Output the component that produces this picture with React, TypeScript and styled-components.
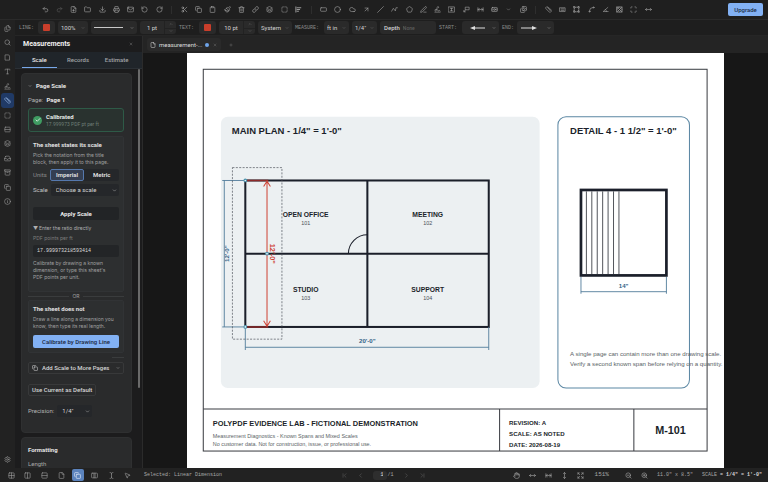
import React from "react";
import styled, { createGlobalStyle, css } from "styled-components";
import {
  Undo2, Redo2, FilePlus, Folder, Download, Printer, Mail, RotateCcw, RotateCw, Scissors, Copy, Clipboard,
  Paintbrush, Trash2, Link, Layers, SquareDashed, RectangleHorizontal, Circle, Cloud, ArrowUpRight, Slash,
  Pentagon, PenLine, Signature, ChevronDown, Images, Ruler, VectorSquare, Spline, Scan, MoveHorizontal,
  MoveVertical, Files, Search, Type, Inbox, Archive, Info, Settings, X, Plus, File,
  Grid2x2, Columns2, Rows2, TextCursor, MousePointer2, ChevronLeft, ChevronRight, ChevronFirst, ChevronLast,
  ZoomIn, ZoomOut, Check, Hand, Expand, ChevronUp,
} from "lucide-react";

const ui = `Roboto, "Liberation Sans", sans-serif`;
const mono = `"Liberation Mono", monospace`;

const GlobalStyle = createGlobalStyle`
  *, *::before, *::after { box-sizing: border-box; }
  html, body, #root { height: 100%; margin: 0; }
  body { overflow: hidden; background: #171717; }
  button, input, select { font: inherit; color: inherit; margin: 0; padding: 0; border: 0; background: none; }
  h2, h3, p { margin: 0; }
`;

const Shell = styled.div`
  display: grid;
  grid-template-rows: 20px minmax(0, 1fr) 14px;
  height: 100vh;
  font: 400 6px/8px ${ui};
  color: #c9c9c9;
  background: #202020;
`;

/* ---------- top toolbar ---------- */
const Toolbar = styled.header`
  display: flex;
  align-items: center;
  padding: 0 5px 0 38px;
  background: #1f1f1f;
  border-bottom: 1px solid #2a2a2a;
`;
const ToolGroup = styled.div`
  display: flex;
  flex: 1;
  align-items: center;
`;
const Tool = styled.button<{ $dim?: boolean }>`
  display: flex;
  flex: 1;
  justify-content: center;
  color: ${(p) => (p.$dim ? "#5c5c5c" : "#a9a9a9")};
`;
const Divider = styled.span`
  width: 1px;
  height: 8px;
  margin: 0 5px;
  background: #2e2e2e;
`;
const Upgrade = styled.button`
  width: 35px;
  height: 13px;
  margin-left: 73px;
  border-radius: 2px;
  background: #82b1f4;
  color: #1c2c46;
  font-weight: 500;
`;

/* ---------- left rail ---------- */
const Middle = styled.div`
  display: grid;
  grid-template-columns: 15px minmax(0, 1fr);
  min-height: 0;
`;
const Rail = styled.nav`
  display: flex;
  flex-direction: column;
  justify-content: space-between;
  background: #222222;
  padding: 1px 1px 2px;
`;
const RailGroup = styled.div`
  display: flex;
  flex-direction: column;
  height: 188px;
`;
const RailButton = styled.button<{ $active?: boolean }>`
  display: flex;
  flex: 1;
  align-items: center;
  justify-content: center;
  border-radius: 3px;
  color: ${(p) => (p.$active ? "#a9c9f7" : "#9b9b9b")};
  background: ${(p) => (p.$active ? "#203a66" : "none")};
`;
const SettingsButton = styled(RailButton)`
  flex: none;
  height: 14px;
`;
const Work = styled.div`
  display: grid;
  grid-template-rows: 16px minmax(0, 1fr);
  min-height: 0;
`;

/* ---------- property bar ---------- */
const PropBar = styled.div`
  display: flex;
  align-items: center;
  gap: 3px;
  padding-left: 4px;
  background: #1e1e1e;
  border-bottom: 1px solid #262626;
`;
const PropLabel = styled.span<{ $w: number }>`
  width: ${(p) => p.$w}px;
  font: 5px/8px ${mono};
  color: #8a8a8a;
  white-space: nowrap;
`;
const field = css`
  height: 13px;
  border-radius: 3px;
  background: #2a2a2a;
  color: #d2d2d2;
`;
const Swatch = styled.button`
  ${field}
  width: 17px;
  display: grid;
  place-items: center;
  &::after { content: ""; width: 7px; height: 7px; border-radius: 1px; background: #c93e2b; }
`;
const SelectBox = styled.span<{ $w: number }>`
  ${field}
  display: flex;
  align-items: center;
  width: ${(p) => p.$w}px;
  padding: 0 3px;
  select { flex: 1; min-width: 0; appearance: none; outline: 0; font-size: 6px; height: 11px; }
  option { background: #2a2a2a; }
  svg { flex: none; color: #8a8a8a; }
`;
const DrawnSelect = styled.button<{ $w: number }>`
  ${field}
  display: flex;
  align-items: center;
  justify-content: space-between;
  width: ${(p) => p.$w}px;
  padding: 0 3px;
`;
const Stepper = styled.span`
  ${field}
  display: grid;
  grid-template-columns: 1fr 12px;
  width: 36px;
  overflow: hidden;
  input { width: 100%; text-align: center; font-size: 6px; outline: 0; }
`;
const Spin = styled.span`
  display: grid;
  grid-template-rows: 1fr 1fr;
  border-left: 1px solid #222222;
  button { display: grid; place-items: center; color: #8a8a8a; }
  button + button { border-top: 1px solid #222222; }
`;
const DepthField = styled.label`
  ${field}
  display: flex;
  align-items: center;
  gap: 3px;
  width: 56px;
  padding: 0 4px;
  font-weight: 500;
  input { width: 100%; min-width: 0; font-size: 5px; outline: 0; }
  input::placeholder { color: #5f5f5f; opacity: 1; }
`;

/* ---------- side panel ---------- */
const Body = styled.div`
  display: grid;
  grid-template-columns: 128px minmax(0, 1fr);
  min-height: 0;
`;
const Side = styled.aside`
  display: grid;
  grid-template-rows: 16px 17px minmax(0, 1fr);
  min-height: 0;
  background: #1c1c1d;
  border-right: 1px solid #2b2b2b;
`;
const SideHead = styled.div`
  display: flex;
  align-items: center;
  justify-content: space-between;
  padding: 0 9px 0 8px;
  h2 { font-size: 7px; font-weight: 700; color: #f0f0f0; }
  button { display: flex; color: #9a9a9a; }
`;
const Tabs = styled.div`
  display: grid;
  grid-template-columns: repeat(3, 1fr);
  padding: 0 6px 0 5px;
  background: #20252a;
  border-bottom: 1px solid #2b3035;
`;
const Tab = styled.button<{ $active?: boolean }>`
  margin: 0 2px;
  font-weight: 500;
  color: ${(p) => (p.$active ? "#e8e8e8" : "#a0a4a8")};
  border-bottom: 1px solid ${(p) => (p.$active ? "#78a8ea" : "transparent")};
`;
const Scroller = styled.div`
  display: grid;
  grid-template-columns: minmax(0, 1fr) 2px;
  gap: 6px;
  padding: 0 2px 0 6px;
  min-height: 0;
  overflow: hidden;
`;
const Thumb = styled.span`
  height: 80%;
  border-radius: 1px;
  background: #6a6a6a;
`;
const Cards = styled.div`
  display: flex;
  flex-direction: column;
  gap: 4px;
  padding-top: 4px;
  min-height: 0;
`;
const Card = styled.section`
  flex: none;
  display: flex;
  flex-direction: column;
  padding: 8px 7px 8px 6px;
  border-radius: 4px;
  background: #2a2b2c;
  border: 1px solid #2f3031;
`;
const CardTitle = styled.h2`
  display: flex;
  align-items: center;
  gap: 4px;
  font-size: 6px;
  line-height: 8px;
  font-weight: 700;
  color: #e4e4e4;
`;
const PageLine = styled.p`
  margin: 6px 0 4px;
  color: #b4b4b4;
  strong { margin-left: 2px; font-weight: 700; color: #e8e8e8; }
`;
const Calibrated = styled.div`
  display: flex;
  align-items: center;
  gap: 4px;
  height: 24px;
  padding: 0 4px;
  border: 1px solid #2e5a47;
  border-radius: 3px;
  background: #29322f;
  strong { display: block; font-weight: 700; color: #e2e8e4; }
  small { display: block; font: 5px/7px ${ui}; color: #6f7f77; }
`;
const Tick = styled.span`
  display: grid;
  place-items: center;
  width: 9px;
  height: 9px;
  border-radius: 50%;
  background: #3f9c62;
  color: #ffffff;
`;
const Spacer = styled.span`
  height: 4px;
`;
const Option = styled.div`
  display: flex;
  flex-direction: column;
  padding: 4px;
  border: 1px solid #313335;
  border-radius: 2px;
  background: #2d2f30;
  h3 { font-size: 6px; line-height: 8px; font-weight: 700; color: #e0e0e0; }
`;
const Para = styled.p<{ $narrow?: boolean }>`
  margin: 3px 0 2px;
  padding-right: ${(p) => (p.$narrow ? 6 : 0)}px;
  font: 5px/7px Inter, sans-serif;
  color: #a0a0a0;
`;
const FieldRow = styled.div`
  display: flex;
  align-items: center;
  gap: 3px;
  margin-top: 1px;
  color: #8b8b8b;
`;
const Segments = styled.div`
  display: grid;
  grid-template-columns: 1fr 1fr;
  flex: 1;
  height: 12px;
  border-radius: 2px;
  background: #25272a;
`;
const Segment = styled.button<{ $active?: boolean }>`
  border-radius: 2px;
  font-weight: 700;
  color: #dcdcdc;
  border: 1px solid ${(p) => (p.$active ? "#5578ad" : "transparent")};
  background: ${(p) => (p.$active ? "#353f52" : "none")};
`;
const ScaleRow = styled(FieldRow)`
  margin-top: 3px;
  color: #c4c4c4;
`;
const DarkSelect = styled.span<{ $w?: number }>`
  display: flex;
  align-items: center;
  ${(p) => (p.$w ? `width: ${p.$w}px;` : "flex: 1;")}
  height: 12px;
  padding: 0 2px 0 5px;
  border-radius: 2px;
  background: #25272a;
  color: #d4d4d4;
  select { flex: 1; min-width: 0; appearance: none; outline: 0; font-size: 6px; height: 11px; }
  option { background: #25272a; }
`;
const DarkButton = styled.button`
  height: 13px;
  margin-top: 11px;
  border-radius: 2px;
  background: #222426;
  color: #e8e8e8;
  font-weight: 700;
`;
const Details = styled.details`
  margin-top: 4px;
  summary { font: 5px/8px Inter, sans-serif; color: #b0b0b0; list-style: none; }
  summary::before { content: "▼"; margin-right: 1px; }
  label { display: block; margin: 2px 0 3px; font: 5px/8px Inter, sans-serif; color: #7e7e7e; }
  input {
    width: 100%; height: 12px; padding: 0 4px; border-radius: 2px; outline: 0;
    background: #232527; color: #dadada; font: 5px/8px ${mono};
  }
`;
const Or = styled.div`
  display: flex;
  align-items: center;
  gap: 3px;
  height: 8px;
  font: 5px/8px Inter, sans-serif;
  color: #a0a0a0;
  &::before, &::after { content: ""; flex: 1; height: 1px; background: #3a3c3d; }
`;
const PrimaryButton = styled.button`
  height: 13px;
  margin-top: 3px;
  border-radius: 2px;
  background: #82b1f4;
  color: #1a2740;
  font-weight: 500;
`;
const ShortRule = styled.span`
  align-self: flex-end;
  width: 12px;
  height: 1px;
  margin: 4px 0;
  background: #3a3c3d;
`;
const OutlineButton = styled.button<{ $fit?: boolean }>`
  display: flex;
  align-items: center;
  gap: 4px;
  height: 12px;
  padding: 0 3px;
  border: 1px solid #38393a;
  border-radius: 2px;
  font-weight: 500;
  color: #d6d6d6;
  white-space: nowrap;
  ${(p) => p.$fit && "align-self: flex-start; margin: 10px 0 9px;"}
  svg:last-child:not(:first-child) { margin-left: auto; }
`;
const Precision = styled(FieldRow)`
  margin: 0 0 7px;
  color: #b4b4b4;
`;
const LengthLabel = styled.p`
  margin-top: 6px;
  color: #a8a8a8;
`;

/* ---------- document area ---------- */
const Main = styled.main`
  display: grid;
  grid-template-rows: 17px minmax(0, 1fr);
  min-height: 0;
  background: #171717;
`;
const DocTabs = styled.div`
  display: flex;
  align-items: center;
  gap: 8px;
  padding: 0 4px;
  background: #242424;
  color: #8a8a8a;
  > button { display: flex; }
`;
const DocTab = styled.div`
  display: flex;
  align-items: center;
  gap: 3px;
  height: 13px;
  padding: 0 4px 0 3px;
  border-radius: 3px;
  background: #2a2a2a;
  color: #dcdcdc;
  button { display: flex; margin-left: 1px; color: #8a8a8a; }
`;
const Dot = styled.span`
  width: 4px;
  height: 4px;
  border-radius: 50%;
  background: #6fa5ea;
`;
const Canvas = styled.div`
  overflow: hidden;
  min-height: 0;
`;
const Sheet = styled.div`
  height: 100%;
  max-width: 100%;
  aspect-ratio: 11 / 8.5;
  margin: 0 auto;
  background: #ffffff;
  svg { display: block; width: 100%; height: 100%; }
`;

/* ---------- status bar ---------- */
const Status = styled.footer`
  display: grid;
  grid-template-columns: 1fr auto 1fr;
  align-items: center;
  padding: 0 6px 0 3px;
  background: #222222;
  font: 5px/8px ${mono};
  color: #a8a8a8;
`;
const StatusLeft = styled.div`
  display: flex;
  align-items: center;
  gap: 8px;
  white-space: nowrap;
`;
const ViewModes = styled.div`
  display: grid;
  grid-template-columns: repeat(8, 1fr);
  width: 133px;
`;
const ViewButton = styled.button<{ $active?: boolean }>`
  display: grid;
  place-items: center;
  height: 12px;
  margin: 0 2px;
  border-radius: 2px;
  color: ${(p) => (p.$active ? "#eaf2ff" : "#a0a0a0")};
  background: ${(p) => (p.$active ? "#5b83bd" : "none")};
`;
const Pager = styled.div`
  display: flex;
  align-items: center;
  gap: 9px;
  padding-left: 2px;
  color: #5a5a5a;
  button { display: flex; }
  label { display: flex; align-items: center; color: #a8a8a8; }
  input { width: 14px; height: 9px; padding-right: 4px; border-radius: 3px; background: #2e2e2e; color: #e4e4e4; text-align: right; outline: 0; }
`;
const Readouts = styled.div`
  display: flex;
  align-items: center;
  justify-content: flex-end;
  gap: 9px;
  white-space: nowrap;
  button { display: flex; }
  strong { color: #d8d8d8; }
`;
const ZoomLevel = styled.span`
  padding: 0 7px 0 2px;
  font-size: 6px;
`;

/* ---------- small drawn icons ---------- */
type IconProps = { size?: number };
const Glyph = ({ size = 8, children }: React.PropsWithChildren<IconProps>) => (
  <svg width={size} height={size} viewBox="0 0 24 24" fill="none" stroke="currentColor" strokeWidth="2" strokeLinecap="round" strokeLinejoin="round" aria-hidden="true">
    {children}
  </svg>
);
const Polyline = (p: IconProps) => <Glyph {...p}><path d="M2 18 8 8l7 9 2-11h5" /></Glyph>;
const Align = (p: IconProps) => <Glyph {...p}><path d="M3 3v18M7 6h13M7 12h9M7 18h5" strokeWidth="3" /></Glyph>;
const TextBox = (p: IconProps) => <Glyph {...p}><rect x="2" y="3" width="20" height="18" /><path d="M8 8h8M12 8v8M9 16h6" /></Glyph>;
const Callout = (p: IconProps) => <Glyph {...p}><path d="M9 4h12v9H9zM9 13l-6 7M3 15v5h5" /></Glyph>;
const Dimension = (p: IconProps) => <Glyph {...p}><path d="M3 6v12M21 6v12M4 12h16M8 8l-4 4 4 4M16 8l4 4-4 4" /></Glyph>;
const Stamp = (p: IconProps) => <Glyph {...p}><rect x="2" y="5" width="20" height="14" rx="3" /><circle cx="12" cy="12" r="3" /><path d="M6 9v6M18 9v6" /></Glyph>;
const Area = (p: IconProps) => <Glyph {...p}><path d="M3 6h18v13H3zM7 10h10M7 15h10" /></Glyph>;
const Angle = (p: IconProps) => <Glyph {...p}><path d="M20 5 4 19h17M12 12a8 8 0 0 1 3 7" /></Glyph>;
const Hatch = (p: IconProps) => <Glyph {...p}><rect x="3" y="3" width="18" height="18" /><path d="m4 4 16 16M20 4 4 20M12 4l8 8-8 8-8-8z" /></Glyph>;
const PageMark = (p: IconProps) => <Glyph {...p}><path d="M5 3h11l3 4v14H5z" /></Glyph>;
const SplitPage = (p: IconProps) => <Glyph {...p}><rect x="3" y="4" width="18" height="16" rx="2" /><path d="M3 12h18" /></Glyph>;
const OpenPages = (p: IconProps) => <Glyph {...p}><rect x="2" y="4" width="20" height="16" rx="2" /><path d="M10 4v16M14 4v16" /></Glyph>;
const LongArrow = ({ flip }: { flip?: boolean }) => (
  <svg width="22" height="6" viewBox="0 0 22 6" fill="none" stroke="#dedede" aria-hidden="true">
    {flip ? <path d="M20 3H8" /> : <path d="M1 3h12" />}
    <path d={flip ? "M10 1 5 3l5 2z" : "M12 1l5 2-5 2z"} fill="#dedede" stroke="none" />
  </svg>
);

type Item = [string, React.ComponentType<any>];
const tools: Item[][] = [
  [["Undo", Undo2], ["Redo", Redo2], ["New", FilePlus], ["Open", Folder], ["Save", Download], ["Print", Printer], ["Email", Mail], ["Rotate left", RotateCcw], ["Rotate right", RotateCw]],
  [["Cut", Scissors], ["Copy", Copy], ["Paste", Clipboard], ["Format painter", Paintbrush], ["Delete", Trash2], ["Link", Link], ["Layers", Layers], ["Select area", SquareDashed], ["Align", Align]],
  [["Rectangle", RectangleHorizontal], ["Ellipse", Circle], ["Cloud", Cloud], ["Arrow", ArrowUpRight], ["Line", Slash], ["Polyline", Polyline], ["Polygon", Pentagon], ["Pencil", PenLine], ["Signature", Signature], ["Text box", TextBox], ["Callout", Callout], ["Dimension", Dimension], ["Stamp", Stamp], ["More shapes", ChevronDown], ["Images", Images]],
  [["Measure", Ruler], ["Area", Area], ["Perimeter", VectorSquare], ["Curve", Spline], ["Angle", Angle], ["Hatch", Hatch], ["Region", Scan], ["Width", MoveHorizontal]],
];
const rail: Item[] = [["Pages", Files], ["Search", Search], ["Bookmarks", PageMark], ["Text", Type], ["Signatures", Signature], ["Measurements", Ruler], ["Selection", SquareDashed], ["Layout", SplitPage], ["Layers", Layers], ["Inbox", Inbox], ["Archive", Archive], ["Compare", Copy], ["Info", Info]];
const views: Item[] = [["Grid", Grid2x2], ["Two columns", Columns2], ["Rows", Rows2], ["Single page", File], ["Overlay", Copy], ["Book", OpenPages], ["Text cursor", TextCursor], ["Pointer", MousePointer2]];
const zooms: Item[] = [["Pan", Hand], ["Fit width", MoveHorizontal], ["Fit page", Dimension], ["Fit height", MoveVertical], ["Full screen", Expand]];

const PropSelect = ({ label, value, w }: { label: string; value: string; w: number }) => (
  <SelectBox $w={w}>
    <select aria-label={label} defaultValue={value}><option>{value}</option></select>
    <ChevronDown size={4} />
  </SelectBox>
);
const SizeStepper = ({ label, value }: { label: string; value: string }) => (
  <Stepper>
    <input aria-label={label} defaultValue={value} />
    <Spin>
      <button aria-label={`Increase ${label}`}><ChevronUp size={4} /></button>
      <button aria-label={`Decrease ${label}`}><ChevronDown size={4} /></button>
    </Spin>
  </Stepper>
);

/* ---------- the sheet, drawn in PDF points (11 x 8.5 in) ---------- */
const Txt = styled.text<{ $size: number; $bold?: boolean; $mid?: boolean }>`
  font-family: "Liberation Sans", Arial, sans-serif;
  font-size: ${(p) => p.$size}px;
  font-weight: ${(p) => (p.$bold ? 700 : 400)};
  text-anchor: ${(p) => (p.$mid ? "middle" : "start")};
`;
const ink = "#1b1f2a";
const blue = "#336488";
const red = "#cf4436";
const rooms: [string, string, number, number][] = [
  ["OPEN OFFICE", "101", 175, 242],
  ["MEETING", "102", 355, 242],
  ["STUDIO", "103", 175, 352],
  ["SUPPORT", "104", 355, 352],
];
const Drawing = () => (
  <svg viewBox="0 0 792 612" fill="none" role="img" aria-label="Sheet M-101">
    <rect x="50" y="94" width="470" height="400" rx="10" fill="#ecf0f2" />
    <rect x="547" y="94" width="194" height="400" rx="12" stroke="#5b87a3" strokeWidth="1.5" />
    <g stroke="#3a3d42" strokeWidth="1.5">
      <rect x="24" y="24" width="743" height="563" />
      <path d="M24 525h743M461 525v62M659 525v62" />
    </g>
    <g fill={ink}>
      <Txt x="66" y="119" $size={14} $bold>MAIN PLAN - 1/4" = 1'-0"</Txt>
      <Txt x="565" y="119" $size={14} $bold>DETAIL 4 - 1 1/2" = 1'-0"</Txt>
    </g>
    <g stroke={ink} strokeWidth="3">
      <rect x="86" y="188" width="359" height="216" />
      <path d="M266 188v216M86 296h359" />
      <path d="M238 296a28 28 0 0 1 28-28" strokeWidth="1.5" />
    </g>
    {rooms.map(([name, no, x, y]) => (
      <g key={no}>
        <Txt x={x} y={y} fill={ink} $size={10} $bold $mid>{name}</Txt>
        <Txt x={x} y={y + 12} fill="#4b5058" $size={8} $mid>{no}</Txt>
      </g>
    ))}
    <g stroke="#4d7a98" strokeWidth="1.3">
      <path d="M55 188v216M52 188h34M52 404h34M86 404v34M445 404v34M86 434h359" />
      <path d="M581 330v25M707 330v25M581 352h126" />
    </g>
    <g fill={blue}>
      <Txt transform="translate(62 296) rotate(-90)" $size={9} $bold $mid>12'-0"</Txt>
      <Txt x="266" y="428" $size={9} $bold $mid>20'-0"</Txt>
      <Txt x="644" y="346" $size={9} $bold $mid>14"</Txt>
    </g>
    <rect x="581" y="202" width="126" height="126" stroke={ink} strokeWidth="4" />
    <path d="M589 204v122M597 204v122M605 204v122M613 204v122M621 204v122M629 204v122M637 204v122" stroke="#3a3e44" strokeWidth="1.3" />
    <g fill="#5a5f66">
      <Txt x="565" y="447" $size={9}>A single page can contain more than one drawing scale.</Txt>
      <Txt x="565" y="462" $size={9}>Verify a second known span before relying on a quantity.</Txt>
      <Txt x="38" y="568" $size={8}>Measurement Diagnostics - Known Spans and Mixed Scales</Txt>
      <Txt x="38" y="580" $size={8}>No customer data. Not for construction, issue, or professional use.</Txt>
    </g>
    <g fill={ink}>
      <Txt x="38" y="550" $size={11} $bold>POLYPDF EVIDENCE LAB - FICTIONAL DEMONSTRATION</Txt>
      <Txt x="475" y="549" $size={9} $bold>REVISION: A</Txt>
      <Txt x="475" y="565" $size={9} $bold>SCALE: AS NOTED</Txt>
      <Txt x="475" y="581" $size={9} $bold>DATE: 2026-08-19</Txt>
      <Txt x="713" y="562" $size={16} $bold $mid>M-101</Txt>
    </g>
    <path d="M86 188h34M86 404h34" stroke="#8e2a2a" strokeWidth="2" />
    <path d="M118 189v214M113 197l5-8 5 8M113 395l5 8 5-8" stroke={red} strokeWidth="1.5" />
    <Txt transform="translate(122 296) rotate(90)" fill={red} $size={11} $bold $mid>12'-0"</Txt>
    <rect x="67" y="169" width="73" height="253" stroke="#4a4f57" strokeWidth="1" strokeDasharray="3 2" />
    <g fill="#e8f4f8" stroke="#4a93ad" strokeWidth="1.5">
      <circle cx="86" cy="188" r="2" />
      <circle cx="86" cy="404" r="2" />
      <circle cx="118" cy="296" r="2" />
    </g>
  </svg>
);

export default function App() {
  return (
    <Shell>
      <GlobalStyle />
      <Toolbar>
        <ToolGroup>
          {tools.map((group, i) => (
            <React.Fragment key={i}>
              {i > 0 && <Divider />}
              {group.map(([name, Icon]) => (
                <Tool key={name} aria-label={name} $dim={name === "Redo"}>
                  <Icon size={name === "More shapes" ? 5 : 7} />
                </Tool>
              ))}
            </React.Fragment>
          ))}
        </ToolGroup>
        <Upgrade>Upgrade</Upgrade>
      </Toolbar>

      <Middle>
        <Rail>
          <RailGroup>
            {rail.map(([name, Icon]) => (
              <RailButton key={name} aria-label={name} $active={name === "Measurements"}><Icon size={7} /></RailButton>
            ))}
          </RailGroup>
          <SettingsButton aria-label="Settings"><Settings size={7} /></SettingsButton>
        </Rail>

        <Work>
          <PropBar>
            <PropLabel $w={16}>LINE:</PropLabel>
            <Swatch aria-label="Line colour" />
            <PropSelect label="Opacity" value="100%" w={30} />
            <DrawnSelect $w={46} aria-label="Line style">
              <svg width="29" height="3" viewBox="0 0 29 3" aria-hidden="true"><path d="M0 1.5h29" stroke="#c8c8c8" /></svg>
              <ChevronDown size={4} />
            </DrawnSelect>
            <SizeStepper label="Line width" value="1 pt" />
            <PropLabel $w={17}>TEXT:</PropLabel>
            <Swatch aria-label="Text colour" />
            <SizeStepper label="Text size" value="10 pt" />
            <PropSelect label="Font" value="System" w={34} />
            <PropLabel $w={26}>MEASURE:</PropLabel>
            <PropSelect label="Units" value="ft in" w={25} />
            <PropSelect label="Fraction" value={'1/4"'} w={25} />
            <DepthField>Depth<input placeholder="None" /></DepthField>
            <PropLabel $w={20}>START:</PropLabel>
            <DrawnSelect $w={37} aria-label="Line start"><LongArrow flip /><ChevronDown size={4} /></DrawnSelect>
            <PropLabel $w={12}>END:</PropLabel>
            <DrawnSelect $w={37} aria-label="Line end"><LongArrow /><ChevronDown size={4} /></DrawnSelect>
          </PropBar>

          <Body>
            <Side>
              <SideHead>
                <h2>Measurements</h2>
                <button aria-label="Close panel"><X size={4} /></button>
              </SideHead>
              <Tabs>
                <Tab $active>Scale</Tab>
                <Tab>Records</Tab>
                <Tab>Estimate</Tab>
              </Tabs>
              <Scroller>
                <Cards>
                  <Card>
                    <CardTitle><ChevronDown size={4} />Page Scale</CardTitle>
                    <PageLine>Page: <strong>Page 1</strong></PageLine>
                    <Calibrated>
                      <Tick><Check size={6} strokeWidth={3} /></Tick>
                      <div><strong>Calibrated</strong><small>17.999973 PDF pt per ft</small></div>
                    </Calibrated>
                    <Spacer />
                    <Option>
                      <h3>The sheet states its scale</h3>
                      <Para>Pick the notation from the title block, then apply it to this page.</Para>
                      <FieldRow>
                        Units
                        <Segments>
                          <Segment $active>Imperial</Segment>
                          <Segment>Metric</Segment>
                        </Segments>
                      </FieldRow>
                      <ScaleRow>
                        <label htmlFor="scale">Scale</label>
                        <DarkSelect>
                          <select id="scale"><option>Choose a scale</option></select>
                          <ChevronDown size={5} />
                        </DarkSelect>
                      </ScaleRow>
                      <DarkButton>Apply Scale</DarkButton>
                      <Details open>
                        <summary>Enter the ratio directly</summary>
                        <label htmlFor="ratio">PDF points per ft</label>
                        <input id="ratio" defaultValue="17.999973218593414" />
                      </Details>
                      <Para $narrow>Calibrate by drawing a known dimension, or type this sheet's PDF points per unit.</Para>
                      <Spacer />
                    </Option>
                    <Or>OR</Or>
                    <Option>
                      <h3>The sheet does not</h3>
                      <Para>Draw a line along a dimension you know, then type its real length.</Para>
                      <PrimaryButton>Calibrate by Drawing Line</PrimaryButton>
                    </Option>
                    <ShortRule />
                    <OutlineButton><Copy size={6} />Add Scale to More Pages<ChevronDown size={4} /></OutlineButton>
                    <OutlineButton $fit>Use Current as Default</OutlineButton>
                    <Precision>
                      <label htmlFor="precision">Precision:</label>
                      <DarkSelect $w={35}>
                        <select id="precision"><option>1/4"</option></select>
                        <ChevronDown size={5} />
                      </DarkSelect>
                    </Precision>
                  </Card>
                  <Card>
                    <CardTitle>Formatting</CardTitle>
                    <LengthLabel>Length</LengthLabel>
                  </Card>
                </Cards>
                <Thumb />
              </Scroller>
            </Side>

            <Main>
              <DocTabs>
                <DocTab><File size={6} />measurement-...<Dot /><button aria-label="Close tab"><X size={4} /></button></DocTab>
                <button aria-label="New tab"><Plus size={4} /></button>
              </DocTabs>
              <Canvas><Sheet><Drawing /></Sheet></Canvas>
            </Main>
          </Body>
        </Work>
      </Middle>

      <Status>
        <StatusLeft>
          <ViewModes>
            {views.map(([name, Icon]) => (
              <ViewButton key={name} aria-label={name} $active={name === "Overlay"}><Icon size={7} /></ViewButton>
            ))}
          </ViewModes>
          <span>Selected: Linear Dimension</span>
        </StatusLeft>
        <Pager>
          <button aria-label="First page"><ChevronFirst size={7} /></button>
          <button aria-label="Previous page"><ChevronLeft size={7} /></button>
          <label><input aria-label="Page number" defaultValue="1" />/1</label>
          <button aria-label="Next page"><ChevronRight size={7} /></button>
          <button aria-label="Last page"><ChevronLast size={7} /></button>
        </Pager>
        <Readouts>
          {zooms.map(([name, Icon]) => (
            <button key={name} aria-label={name}><Icon size={7} /></button>
          ))}
          <ZoomLevel>151%</ZoomLevel>
          <button aria-label="Zoom out"><ZoomOut size={7} /></button>
          <button aria-label="Zoom in"><ZoomIn size={7} /></button>
          <span>11.0" x 8.5"</span>
          <span>SCALE <strong>= 1/4" = 1'-0"</strong></span>
        </Readouts>
      </Status>
    </Shell>
  );
}
